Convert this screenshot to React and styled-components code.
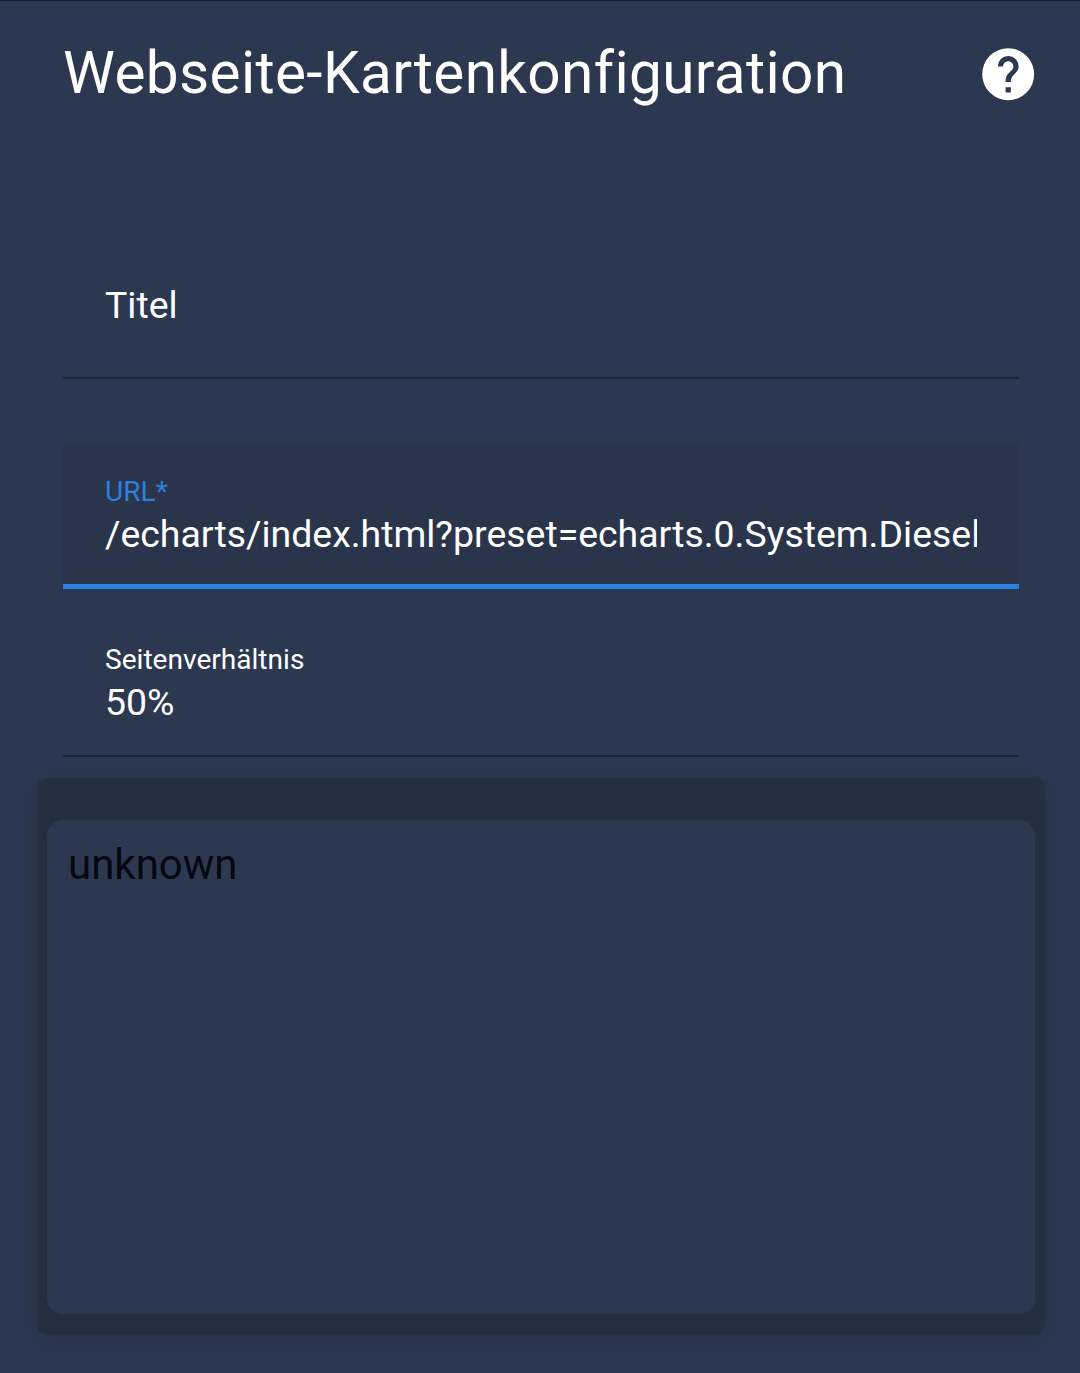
import React from 'react';
import styled, { createGlobalStyle } from 'styled-components';

const GlobalStyle = createGlobalStyle`
  html, body {
    margin: 0;
    padding: 0;
    background: #2c3850;
  }
  * {
    box-sizing: border-box;
  }
`;

const Page = styled.div`
  width: 1080px;
  height: 1373px;
  overflow: hidden;
  background: #2c3850;
  border-top: 1px solid #141c2c;
  font-family: Roboto, 'Liberation Sans', sans-serif;
  color: #ffffff;
`;

const Header = styled.header`
  height: 144px;
  padding: 35px 41px 0 63px;
  display: flex;
  justify-content: space-between;
  align-items: flex-start;
`;

const Title = styled.h2`
  margin: 0;
  font-size: 58.5px;
  line-height: 74px;
  font-weight: 400;
  letter-spacing: 0.36px;
`;

const HelpIcon = styled.svg`
  width: 62.4px;
  height: 62.4px;
  margin-top: 7px;
  fill: #ffffff;
`;

const Fields = styled.div`
  display: flex;
  flex-direction: column;
  margin: 0 61px 0 63px;
`;

const Field = styled.div`
  height: ${(p) => p.$height}px;
  margin-top: ${(p) => p.$top || 0}px;
  padding: ${(p) => p.$padTop}px 42px 0;
  border-bottom: ${(p) => (p.$focused ? '5px solid #2a80e0' : '2px solid #1b2434')};
  background: ${(p) => (p.$focused ? '#2a354b' : 'transparent')};
`;

const PlainLabel = styled.div`
  font-size: 37.44px;
  line-height: 42px;
`;

const SmallLabel = styled.div`
  font-size: 28.08px;
  line-height: 32px;
  color: ${(p) => (p.$focused ? '#2a80e0' : '#ffffff')};
`;

const ValueInput = styled.input`
  display: block;
  width: 872px;
  height: 42px;
  margin: 5px 0 0;
  padding: 0;
  border: 0;
  outline: 0;
  background: transparent;
  font-family: inherit;
  font-size: 37.44px;
  line-height: 42px;
  color: #ffffff;
`;

const Preview = styled.section`
  margin: 21px 35px 0 37px;
  height: 557px;
  padding: 42px 10px 21px;
  background: #242e41;
  border-radius: 10px;
  box-shadow: 0 5px 26px rgba(0, 0, 0, 0.1);
`;

const PreviewCard = styled.div`
  height: 494px;
  padding: 20px 21px;
  background: #2c3850;
  border-radius: 16px;
  color: #050810;
  font-size: 42px;
  line-height: 50px;
`;

export default function App() {
  return (
    <Page>
      <GlobalStyle />
      <Header>
        <Title>Webseite-Kartenkonfiguration</Title>
        <HelpIcon viewBox="0 0 24 24">
          <path d="M15.07,11.25L14.17,12.17C13.45,12.89 13,13.5 13,15H11V14.5C11,13.39 11.45,12.39 12.17,11.67L13.41,10.41C13.78,10.05 14,9.55 14,9C14,7.89 13.1,7 12,7A2,2 0 0,0 10,9H8A4,4 0 0,1 12,5A4,4 0 0,1 16,9C16,9.88 15.64,10.67 15.07,11.25M13,19H11V17H13M12,2A10,10 0 0,0 2,12A10,10 0 0,0 12,22A10,10 0 0,0 22,12C22,6.47 17.5,2 12,2Z" />
        </HelpIcon>
      </Header>
      <Fields>
        <Field $height={234} $padTop={139}>
          <PlainLabel>Titel</PlainLabel>
        </Field>
        <Field $focused $height={146} $top={64} $padTop={33}>
          <SmallLabel $focused>URL*</SmallLabel>
          <ValueInput readOnly value="/echarts/index.html?preset=echarts.0.System.Diesel" />
        </Field>
        <Field $height={168} $padTop={55}>
          <SmallLabel>Seitenverhältnis</SmallLabel>
          <ValueInput readOnly value="50%" />
        </Field>
      </Fields>
      <Preview>
        <PreviewCard>unknown</PreviewCard>
      </Preview>
    </Page>
  );
}
